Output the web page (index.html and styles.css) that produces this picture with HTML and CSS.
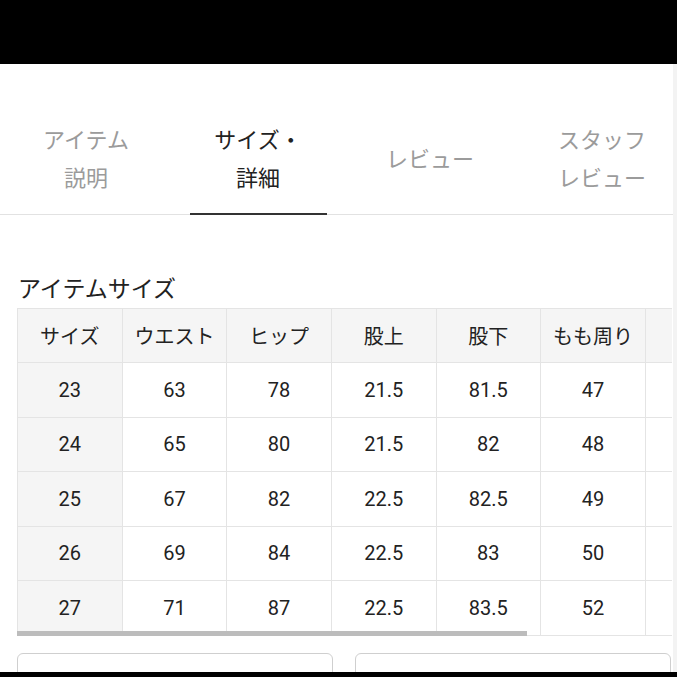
FILE: index.html
```html
<!DOCTYPE html>
<html lang="ja">
<head>
<meta charset="utf-8">
<title>サイズ・詳細</title>
<link rel="stylesheet" href="styles.css">
</head>
<body>
<div class="screen">
  <nav class="tabs">
    <div class="tab"><span class="label">アイテム<br>説明</span></div>
    <div class="tab active"><span class="label">サイズ・<br>詳細</span></div>
    <div class="tab"><span class="label">レビュー</span></div>
    <div class="tab"><span class="label">スタッフ<br>レビュー</span></div>
  </nav>
  <section class="size">
    <h2 class="size-title">アイテムサイズ</h2>
    <div class="table-wrap">
      <table class="size-table">
        <thead>
          <tr><th>サイズ</th><th>ウエスト</th><th>ヒップ</th><th>股上</th><th>股下</th><th>もも周り</th><th></th><th></th></tr>
        </thead>
        <tbody>
          <tr><td>23</td><td>63</td><td>78</td><td>21.5</td><td>81.5</td><td>47</td><td></td><td></td></tr>
          <tr><td>24</td><td>65</td><td>80</td><td>21.5</td><td>82</td><td>48</td><td></td><td></td></tr>
          <tr><td>25</td><td>67</td><td>82</td><td>22.5</td><td>82.5</td><td>49</td><td></td><td></td></tr>
          <tr><td>26</td><td>69</td><td>84</td><td>22.5</td><td>83</td><td>50</td><td></td><td></td></tr>
          <tr><td>27</td><td>71</td><td>87</td><td>22.5</td><td>83.5</td><td>52</td><td></td><td></td></tr>
        </tbody>
      </table>
      <div class="scroll-thumb"></div>
    </div>
    <div class="cards">
      <div class="card"></div>
      <div class="card"></div>
    </div>
  </section>
</div>
</body>
</html>
```

FILE: styles.css
```css
html, body {
  margin: 0;
  padding: 0;
}
body {
  background: #000;
  height: 677px;
  overflow: hidden;
  font-family: "Noto Sans CJK JP", sans-serif;
}
.screen {
  margin-top: 64px;
  height: 608px;
  background: #fff;
  overflow: hidden;
  border-right: 4px solid #f3f3f3;
}
.tabs {
  display: grid;
  grid-template-columns: repeat(4, 172px);
  padding-top: 55px;
  border-bottom: 1px solid #e2e2e2;
}
.tab {
  display: flex;
  flex-direction: column;
  align-items: center;
}
.label {
  height: 76px;
  display: flex;
  align-items: center;
  text-align: center;
  font-size: 22px;
  line-height: 38px;
  color: #9b9b9b;
  margin-bottom: 18px;
}
.tab::after {
  content: "";
  align-self: stretch;
  height: 2px;
  margin: 0 17px -1px 18px;
}
.tab.active .label {
  color: #222;
}
.tab.active::after {
  background: #333;
}
.size-title {
  margin: 57px 0 6px;
  padding: 0 18px;
  font-size: 23px;
  line-height: 30px;
  font-weight: 400;
  color: #222;
}
.table-wrap {
  margin-left: 17px;
  width: 655px;
  overflow: hidden;
}
.size-table {
  border-collapse: collapse;
  table-layout: fixed;
  width: 838px;
  font-family: Roboto, "Noto Sans CJK JP", sans-serif;
  font-size: 20px;
  color: #222;
}
.size-table th,
.size-table td {
  border: 1px solid #e4e4e4;
  padding: 0;
  text-align: center;
  font-weight: 400;
  white-space: nowrap;
}
.size-table th {
  height: 53px;
  background: #f5f5f5;
  font-family: "Noto Sans CJK JP", sans-serif;
}
.size-table td {
  height: 53.5px;
}
.size-table td:first-child {
  background: #f5f5f5;
}
.scroll-thumb {
  position: relative;
  width: 510px;
  height: 5px;
  margin-top: -5px;
  background: #bcbcbc;
}
.cards {
  display: grid;
  grid-template-columns: 316px 316px;
  gap: 22px;
  margin: 17px 0 0 17px;
}
.card {
  height: 60px;
  border: 1px solid #cfcfcf;
  border-radius: 6px;
}
```
